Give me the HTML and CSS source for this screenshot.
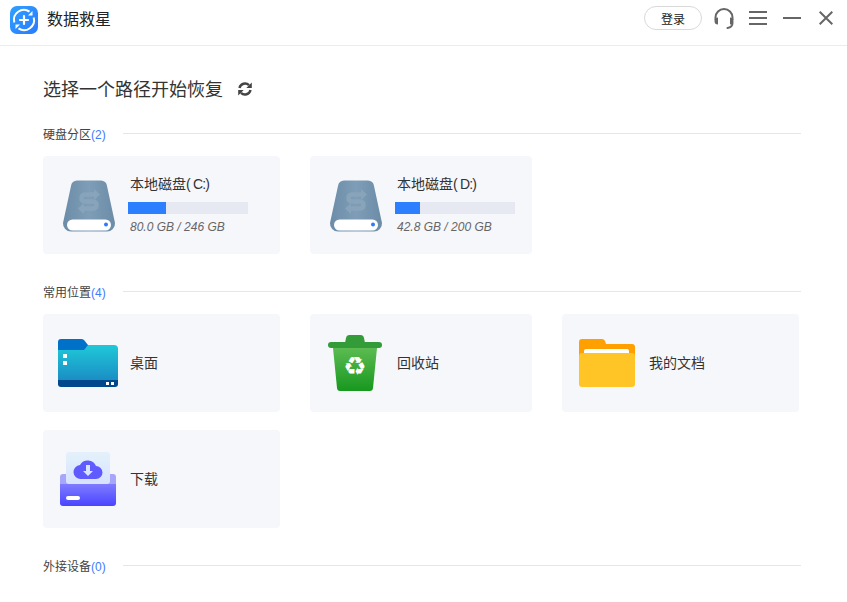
FILE: index.html
```html
<!DOCTYPE html>
<html lang="zh-CN">
<head>
<meta charset="utf-8">
<title>数据救星</title>
<link rel="stylesheet" href="styles.css">
</head>
<body>
<header class="titlebar">
  <div class="brand">
    <svg class="logo" width="28" height="28" viewBox="0 0 28 28">
      <defs><linearGradient id="lg" x1="0" y1="0" x2="1" y2="1"><stop offset="0" stop-color="#2f9fff"/><stop offset="1" stop-color="#2a7bff"/></linearGradient></defs>
      <rect width="28" height="28" rx="7" fill="url(#lg)"/>
      <path d="M4.300 16.500A10 10 0 0 1 19.500 5.600" fill="none" stroke="#fff" stroke-width="2"/>
      <path d="M23.700 11.500A10 10 0 0 1 8.500 22.400" fill="none" stroke="#fff" stroke-width="2"/>
      <path d="M22.500 5v4.500h-4.500zM5.500 23v-4.500h4.500z" fill="#fff"/>
      <path d="M14 10v8M10 14h8" stroke="#fff" stroke-width="2.200" stroke-linecap="round"/>
    </svg>
    <span class="app-name">数据救星</span>
  </div>
  <div class="controls">
    <button class="login">登录</button>
    <svg class="ctl headset" width="22" height="21" viewBox="0 0 22 21" fill="none" stroke="#666" stroke-width="2">
      <path d="M2.500 12V9.500a8.500 8.500 0 0 1 17 0V12"/>
      <path d="M19.500 15c0 2.500-2 4.500-5 5" stroke-linecap="round"/>
      <path d="M5 9.500v7A3.500 3.500 0 0 1 5 9.500zM17 9.500v7A3.500 3.500 0 0 0 17 9.500z" fill="#666" stroke="none"/>
    </svg>
    <svg class="ctl menu" width="18" height="14" viewBox="0 0 18 14" stroke="#666" stroke-width="2"><path d="M0 1h18M0 7h18M0 13h18"/></svg>
    <svg class="ctl minimize" width="18" height="2" viewBox="0 0 18 2" stroke="#666" stroke-width="2"><path d="M0 1h18"/></svg>
    <svg class="ctl" width="14" height="14" viewBox="0 0 14 14" stroke="#666" stroke-width="2"><path d="M.7.7l12.600 12.600M13.300.7L.7 13.300"/></svg>
  </div>
</header>

<main class="content">
  <div class="heading">
    <h1>选择一个路径开始恢复</h1>
    <svg class="refresh" width="14" height="14" viewBox="0 0 14 14" fill="none" stroke="#444" stroke-width="2.400">
      <path d="M1.500 6A5.600 5.600 0 0 1 11 3.200"/>
      <path d="M12.500 8A5.600 5.600 0 0 1 3 10.800"/>
      <path d="M13.800 .5v5.500h-5.500zM.2 13.500V8h5.500z" fill="#444" stroke="none"/>
    </svg>
  </div>

  <section class="group">
    <div class="group-title"><span>硬盘分区<em>(2)</em></span><i></i></div>
    <div class="cards">
      <article class="card">
        <svg class="disk" width="54" height="52" viewBox="0 0 54 52">
          <defs><linearGradient id="dg" x1="0" y1="0" x2="1" y2="0"><stop offset="0" stop-color="#6b8ca8"/><stop offset=".5" stop-color="#7f9db6"/><stop offset="1" stop-color="#6b8ca8"/></linearGradient></defs>
          <path d="M9 6a6 6 0 0 1 6-5.500h24a6 6 0 0 1 6 5.500l8 37a8 8 0 0 1-8 8.500H9a8 8 0 0 1-8-8.500z" fill="url(#dg)"/>
          <rect x="5" y="39.500" width="44" height="11" rx="5.500" fill="#fff"/>
          <circle cx="44" cy="44.500" r="2" fill="#2a7bff"/>
          <path d="M33 14.500H24q-4.500 0-4.500 3.500t4.500 3.500h6q4.500 0 4.500 3.500t-4.500 3.500H21" fill="none" stroke="#88a4ba" stroke-width="4.500"/>
          <path d="M32 9l6 5.500-6 5.500zM22 23l-6 5.500 6 5.500z" fill="#88a4ba"/>
        </svg>
        <div class="info">
          <div class="name">本地磁盘<span class="drive">( C:)</span></div>
          <div class="bar"><div class="fill" style="width:38px"></div></div>
          <div class="size">80.0 GB / 246 GB</div>
        </div>
      </article>
      <article class="card">
        <svg class="disk" width="54" height="52" viewBox="0 0 54 52">
          <path d="M9 6a6 6 0 0 1 6-5.500h24a6 6 0 0 1 6 5.500l8 37a8 8 0 0 1-8 8.500H9a8 8 0 0 1-8-8.500z" fill="url(#dg)"/>
          <rect x="5" y="39.500" width="44" height="11" rx="5.500" fill="#fff"/>
          <circle cx="44" cy="44.500" r="2" fill="#2a7bff"/>
          <path d="M33 14.500H24q-4.500 0-4.500 3.500t4.500 3.500h6q4.500 0 4.500 3.500t-4.500 3.500H21" fill="none" stroke="#88a4ba" stroke-width="4.500"/>
          <path d="M32 9l6 5.500-6 5.500zM22 23l-6 5.500 6 5.500z" fill="#88a4ba"/>
        </svg>
        <div class="info">
          <div class="name">本地磁盘<span class="drive">( D:)</span></div>
          <div class="bar"><div class="fill" style="width:25px"></div></div>
          <div class="size">42.8 GB / 200 GB</div>
        </div>
      </article>
    </div>
  </section>

  <section class="group">
    <div class="group-title"><span>常用位置<em>(4)</em></span><i></i></div>
    <div class="cards">
      <article class="card simple">
        <svg class="ico" width="60" height="48" viewBox="0 0 60 48">
          <defs><linearGradient id="fg" x1="0" y1="0" x2="0" y2="1"><stop offset="0" stop-color="#1fc9d8"/><stop offset="1" stop-color="#1a8cc4"/></linearGradient></defs>
          <path d="M0 10q0-4 4-4h52q4 0 4 4v32H0z" fill="url(#fg)"/>
          <path d="M0 6V3q0-3 3-3h20q2 0 3 1l4 5-4 5H0z" fill="#0071c9"/>
          <path d="M0 41h60v4q0 3-3 3H3q-3 0-3-3z" fill="#00478c"/>
          <path d="M5 15h4v4H5zM5 22h4v4H5zM48 43h3v3h-3zM53 43h3v3h-3z" fill="#fff"/>
        </svg>
        <span class="label">桌面</span>
      </article>
      <article class="card simple">
        <svg class="ico bin" width="54" height="56" viewBox="0 0 54 56">
          <defs><linearGradient id="bg" x1="0" y1="0" x2="0" y2="1"><stop offset="0" stop-color="#5cbb52"/><stop offset="1" stop-color="#17981f"/></linearGradient></defs>
          <path d="M17 8l1-5q.5-3 3.500-3h11q3 0 3.500 3l1 5z" fill="#339c39"/>
          <rect y="7" width="54" height="6" rx="3" fill="#339c39"/>
          <path d="M5 13h44l-4 40q-.3 3-3 3H12q-2.700 0-3-3z" fill="url(#bg)"/>
          <text class="recycle" x="27" y="40" text-anchor="middle">♻</text>
        </svg>
        <span class="label">回收站</span>
      </article>
      <article class="card simple">
        <svg class="ico folder" width="56" height="48" viewBox="0 0 56 48">
          <path d="M3 0h20q2 0 3 2l1 3h26q3 0 3 3v30H0V3q0-3 3-3z" fill="#ff9f00"/>
          <path d="M5 12q0-2 2-2h41q2 0 2 2v8H5z" fill="#fff"/>
          <path d="M0 17q0-3 3-3h50q3 0 3 3v28q0 3-3 3H3q-3 0-3-3z" fill="#ffc526"/>
        </svg>
        <span class="label">我的文档</span>
      </article>
      <article class="card simple">
        <svg class="ico tray" width="56" height="54" viewBox="0 0 56 54">
          <defs>
            <linearGradient id="tg" x1="0" y1="0" x2="0" y2="1"><stop offset="0" stop-color="#7f7cff"/><stop offset="1" stop-color="#4a44ff"/></linearGradient>
            <linearGradient id="pg" x1="0" y1="0" x2="0" y2="1"><stop offset="0" stop-color="#e4f1fb"/><stop offset="1" stop-color="#d7e3fd"/></linearGradient>
          </defs>
          <path d="M3 22h50q3 0 3 3v7H0v-7q0-3 3-3z" fill="#a8a6fb"/>
          <rect x="6" width="44" height="32" rx="3" fill="url(#pg)"/>
          <path d="M21 27a7 7 0 0 1-1-14 9 9 0 0 1 16 1 6.500 6.500 0 0 1 0 13z" fill="#5f5bff"/>
          <path d="M26 13h4v6h3l-5 5-5-5h3z" fill="#d9e4fd"/>
          <path d="M0 32h56v19q0 3-3 3H3q-3 0-3-3z" fill="url(#tg)"/>
          <rect x="6" y="44" width="14" height="4" rx="2" fill="#fff"/>
        </svg>
        <span class="label">下载</span>
      </article>
    </div>
  </section>

  <section class="group">
    <div class="group-title"><span>外接设备<em>(0)</em></span><i></i></div>
  </section>
</main>
</body>
</html>
```
FILE: styles.css
```css
* { box-sizing: border-box; }
html, body { margin: 0; padding: 0; }
body {
  width: 847px;
  height: 602px;
  overflow: hidden;
  background: #fff;
  font-family: "Liberation Sans", "Noto Sans CJK SC", sans-serif;
  color: #333;
}
.titlebar {
  height: 46px;
  border-bottom: 1px solid #ececec;
  display: flex;
  align-items: center;
  justify-content: space-between;
  padding: 0 14px 0 10px;
}
.brand { display: flex; align-items: center; gap: 9px; margin-top: -5px; }
.logo { display: block; }
.app-name { font-size: 16px; color: #222; line-height: 22px; }
.controls { display: flex; align-items: center; margin-top: -9px; }
.login {
  width: 58px;
  height: 24px;
  border: 1px solid #d9d9d9;
  border-radius: 12px;
  background: #fff;
  font: 12px "Noto Sans CJK SC", sans-serif;
  color: #222;
  padding: 0;
  margin-right: 11px;
}
.ctl { display: block; flex: none; }
.headset { margin-right: 14px; }
.menu { margin-right: 16px; }
.minimize { margin-right: 18px; }
.content { padding: 32px 46px 0 43px; }
.heading { display: flex; align-items: center; gap: 15px; height: 24px; margin-bottom: 22px; }
.heading h1 { margin: 0; font-size: 18px; font-weight: 400; line-height: 24px; color: #333; }
.refresh { margin-top: -2px; }
.group-title {
  display: flex;
  align-items: center;
  gap: 17px;
  height: 18px;
  font-size: 12px;
  color: #444;
}
.group-title em { font-style: normal; color: #3d7bff; }
.group-title i { flex: 1; height: 1px; background: #e6e6e6; }
.cards {
  display: grid;
  grid-template-columns: 237px 222px 237px;
  column-gap: 30px;
  row-gap: 18px;
  margin-top: 14px;
  margin-bottom: 28px;
}
.card {
  height: 98px;
  background: #f6f7fb;
  border-radius: 4px;
  display: flex;
  align-items: center;
  padding-left: 19px;
}
.disk { flex: none; display: block; margin-right: 13px; margin-top: 1px; }
.info { display: flex; flex-direction: column; margin-left: -1px; margin-top: -1px; }
.name { font-size: 14px; line-height: 20px; color: #333; padding-left: 2px; }
.drive { letter-spacing: -.8px; }
.bar { width: 120px; height: 12px; background: #e7e9f2; margin-top: 8px; }
.fill { height: 100%; background: #2c7fff; }
.size { font-size: 12px; font-style: italic; line-height: 16px; color: #666; margin-top: 5px; padding-left: 2px; }
.simple { padding-left: 15px; }
.ico { flex: none; display: block; margin-right: 12px; }
.bin { margin-left: 3px; margin-right: 15px; }
.folder { margin-left: 2px; margin-right: 14px; }
.tray { margin-left: 2px; margin-right: 14px; }
.label { font-size: 14px; color: #333; line-height: 18px; }
.recycle { font-family: "DejaVu Sans", sans-serif; font-size: 26px; fill: #fff; }
```
